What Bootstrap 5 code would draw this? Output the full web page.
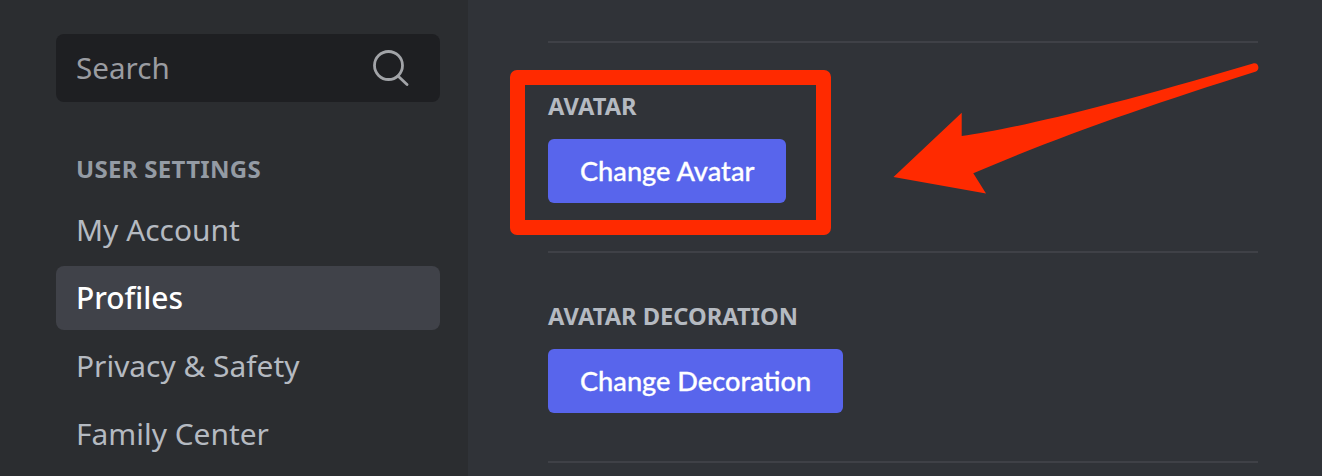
<!doctype html>
<html lang="en">
<head>
<meta charset="utf-8">
<title>Profiles</title>
<link href="https://cdn.jsdelivr.net/npm/bootstrap@5.3.0/dist/css/bootstrap.min.css" rel="stylesheet">
<style>
html,body{height:100%;overflow:hidden}
body{background:#303338;font-family:"Noto Sans",sans-serif}
.shell{width:1322px;height:476px;position:relative;overflow:hidden}
.side{width:468px;flex:none;background:#2b2d30;padding:34px 28px 0 56px}
.searchbox{height:68px;background:#1e1f22;border-radius:8px;padding:0 31px 0 20px;color:#9a9ca1;font-size:29.6px}
.cat{color:#949ba4;font-size:24px;font-weight:700;letter-spacing:.3px;margin:50px 0 0 20px;line-height:34px;height:34px}
.item{height:64px;margin-top:4px;border-radius:8px;padding:0 20px;color:#b5bac1;font-size:29.9px;line-height:64px}
.item.on{background:#404249;color:#fff;font-weight:500}
.cat + .item{margin-top:12px}
.main{flex:1;padding:41px 64px 0 80px}
.rule{height:2px;background:#3f4147}
.field{height:208px;padding-top:46px}
.lbl{color:#b5bac1;font-size:23.7px;font-weight:700;line-height:34px;height:34px;margin-bottom:16px}
.cta{height:64px;padding:0 32px;background:#5865ec;color:#fff;border:0;border-radius:6px;font-family:Lato,sans-serif;font-size:27.2px;font-weight:500;-webkit-text-stroke:.3px #fff;line-height:64px;--bs-btn-hover-bg:#5865ec;--bs-btn-hover-color:#fff}
.redbox{position:absolute;left:510px;top:70px;width:321px;height:165px;border:15px solid #ff2a00;border-radius:7px}
.arrow{position:absolute;left:880px;top:50px}
</style>
</head>
<body>
<div class="shell d-flex">
  <aside class="side">
    <div class="searchbox d-flex align-items-center justify-content-between">
      <span>Search</span>
      <svg width="36" height="36" viewBox="0 0 36 36" fill="none" stroke="#a2a4a8" stroke-width="2.8" stroke-linecap="round"><circle cx="15.5" cy="15.5" r="14"/><path d="M25 26l9 8.5"/></svg>
    </div>
    <div class="cat">USER SETTINGS</div>
    <div class="item">My Account</div>
    <div class="item on">Profiles</div>
    <div class="item">Privacy &amp; Safety</div>
    <div class="item">Family Center</div>
  </aside>
  <main class="main">
    <div class="rule"></div>
    <div class="field">
      <div class="lbl">AVATAR</div>
      <button class="btn cta" type="button">Change Avatar</button>
    </div>
    <div class="rule"></div>
    <div class="field">
      <div class="lbl">AVATAR DECORATION</div>
      <button class="btn cta" type="button">Change Decoration</button>
    </div>
    <div class="rule"></div>
  </main>
  <div class="redbox"></div>
  <svg class="arrow" width="390" height="150" viewBox="880 50 390 150"><path fill="#ff2a00" d="M893.5 177L961.7 112.7V136C1005 130 1090 112 1253 63.5C1259 62 1260 70 1256 71.5C1150 105 1060 136 973.3 173.3L986 193.5Z"/></svg>
</div>
<script src="https://cdn.jsdelivr.net/npm/bootstrap@5.3.0/dist/js/bootstrap.bundle.min.js"></script>
</body>
</html>
